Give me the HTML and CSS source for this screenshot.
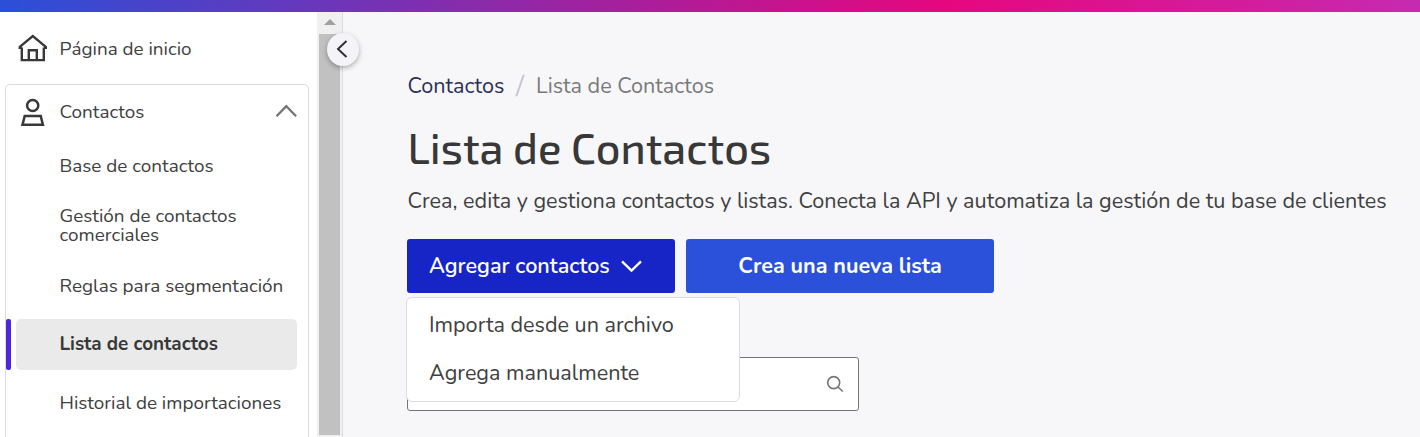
FILE: index.html
```html
<!DOCTYPE html>
<html lang="es">
<head>
  <meta charset="UTF-8" />
  <meta name="viewport" content="width=device-width, initial-scale=1.0" />
  <title>Lista de Contactos</title>
  <link rel="stylesheet" href="styles.css">
</head>
<body>
  <div class="topbar"></div>

  <div class="layout">
    <!-- Sidebar -->
    <aside class="sidebar">
      <nav class="menu">
        <a class="menu-item home">
          <svg class="menu-icon" width="30" height="30" viewBox="0 0 30 30" fill="none" stroke="#383838" stroke-width="2.4">
            <path d="M0.6 14.9H3.8M25.9 14.9H29M1.2 14.3L14.8 3L28.4 14.3M3.8 14.5V27.1H25.8V14.5M10.8 27V17.2H18.8V27" />
          </svg>
          <span>Página de inicio</span>
        </a>

        <div class="group">
          <a class="menu-item group-head">
            <svg class="menu-icon" width="30" height="30" viewBox="0 0 30 30" fill="none" stroke="#383838" stroke-width="2.5">
              <circle cx="14.7" cy="7.5" r="5.6" />
              <path d="M6.7 18H22.7L24.9 26.7H4.5Z" />
            </svg>
            <span>Contactos</span>
            <svg class="caret" width="22" height="14" viewBox="0 0 22 14" fill="none" stroke="#757575" stroke-width="2.3">
              <path d="M1.5 12.2L11.3 2.2L21.1 12.2" />
            </svg>
          </a>
          <div class="submenu">
            <a class="sub-item">Base de contactos</a>
            <a class="sub-item tall">Gestión de contactos<br>comerciales</a>
            <a class="sub-item">Reglas para segmentación</a>
            <a class="sub-item active">Lista de contactos</a>
            <a class="sub-item last">Historial de importaciones</a>
          </div>
        </div>
      </nav>

      <div class="scrollbar">
        <div class="scroll-up"></div>
        <div class="scroll-thumb"></div>
      </div>

      <button class="collapse">
        <svg width="12" height="18" viewBox="0 0 12 18" fill="none" stroke="#2e2e2e" stroke-width="1.9">
          <path d="M10.5 1L2 9L10.5 17" />
        </svg>
      </button>
    </aside>

    <!-- Content -->
    <main class="content">
      <div class="breadcrumb">
        <a class="crumb-link">Contactos</a>
        <svg class="crumb-sep" width="10" height="23" viewBox="0 0 10 23" fill="none" stroke="#c3c7d4" stroke-width="2">
          <path d="M1.3 22.3L8.7 0.7" />
        </svg>
        <span class="crumb-current">Lista de Contactos</span>
      </div>

      <h1>Lista de Contactos</h1>
      <p class="description">Crea, edita y gestiona contactos y listas. Conecta la API y automatiza la gestión de tu base de clientes</p>

      <div class="actions">
        <div class="dropdown">
          <button class="btn btn-dark">
            <span>Agregar contactos</span>
            <svg width="21" height="14" viewBox="0 0 21 14" fill="none" stroke="#fff" stroke-width="2.4">
              <path d="M1 2.3L10.5 11.6L20 2.3" />
            </svg>
          </button>
          <div class="dropdown-menu">
            <a>Importa desde un archivo</a>
            <a>Agrega manualmente</a>
          </div>
        </div>
        <button class="btn btn-blue">Crea una nueva lista</button>
      </div>

      <div class="search">
        <svg width="18" height="18" viewBox="0 0 18 18" fill="none" stroke="#757575" stroke-width="1.6">
          <circle cx="7.7" cy="7.6" r="6" />
          <path d="M12 12L16.8 16.5" />
        </svg>
      </div>
    </main>
  </div>
</body>
</html>
```

FILE: styles.css
```css
* {
  box-sizing: border-box;
}
body {
  margin: 0;
  height: 100vh;
  overflow: hidden;
  background: #f7f7fa;
  color: #404040;
  font-family: Nunito, Lato, sans-serif;
  display: flex;
  flex-direction: column;
}
button {
  font-family: inherit;
  border: 0;
  padding: 0;
}
svg {
  display: block;
  flex: none;
}

.topbar {
  height: 12px;
  flex: none;
  background: linear-gradient(90deg, #2b4fd9 0%, #e6077e 66.6%, #c62ab0 100%);
}

.layout {
  display: flex;
  flex: 1;
  min-height: 0;
}

/* Sidebar */
.sidebar {
  position: relative;
  width: 343px;
  flex: none;
  display: flex;
  background: #fff;
  border-right: 1px solid #dcdcdf;
}
.menu {
  width: 317px;
  overflow: hidden;
  padding-left: 5px;
  font-size: 18.9px;
  line-height: 19px;
  white-space: nowrap;
}
.menu-item {
  display: flex;
  align-items: center;
}
.menu-icon {
  margin-right: 12px;
}
.home {
  height: 72px;
  padding-left: 12.5px;
}
.home span {
  padding-top: 2px;
}
.group {
  width: 304px;
  height: 400px;
  border: 1px solid #dcdcdc;
  border-radius: 5px;
}
.group-head {
  height: 55px;
  padding: 0 11px 0 11.5px;
}
.caret {
  margin: -4px 0 0 auto;
}
.submenu {
  display: flex;
  flex-direction: column;
  gap: 8px;
  padding: 0 11px 0 10px;
}
.sub-item {
  position: relative;
  display: flex;
  align-items: center;
  height: 51px;
  flex: none;
  padding: 1px 0 0 43.5px;
  border-radius: 5px;
}
.sub-item.tall {
  height: 53px;
}
.sub-item.active,
.sub-item.last {
  padding-top: 0;
  padding-bottom: 1px;
}
.sub-item.active {
  background: #eaeaea;
  color: #383838;
  font-weight: 700;
}
.sub-item.active::before {
  content: "";
  position: absolute;
  left: -10px;
  top: 0;
  width: 5px;
  height: 51px;
  border-radius: 2px;
  background: #4a28dc;
}

.scrollbar {
  flex: 1;
  display: flex;
  flex-direction: column;
  padding: 0 2px;
  background: #f0f0f0;
}
.scroll-up {
  height: 22px;
  flex: none;
  display: flex;
  align-items: center;
  justify-content: center;
}
.scroll-up::before {
  content: "";
  margin-top: -2px;
  border: 6px solid transparent;
  border-top: 0;
  border-bottom-color: #a0a0a0;
}
.scroll-thumb {
  flex: 1;
  margin-bottom: 2px;
  background: #c1c1c1;
}
.collapse {
  position: absolute;
  top: 21px;
  right: -17px;
  width: 32px;
  height: 33px;
  display: flex;
  align-items: center;
  justify-content: center;
  padding-right: 3px;
  padding-bottom: 1px;
  border-radius: 50%;
  background: #f4f4f8;
  box-shadow: 0 2px 5px rgba(0, 0, 0, 0.3);
}

/* Content */
.content {
  flex: 1;
  padding: 60px 0 0 64.5px;
  font-size: 21.6px;
  white-space: nowrap;
}
.breadcrumb {
  display: flex;
  align-items: center;
  height: 28px;
}
.crumb-link {
  width: 96.5px;
  color: #2b3156;
}
.crumb-sep {
  margin: -2px 11px 0;
}
.crumb-current {
  color: #7a7a7a;
}
h1 {
  margin: 21px 0 0;
  color: #383838;
  font: 500 43.2px/52px "Exo 2", Roboto, sans-serif;
}
.description {
  margin: 13px 0 0;
  line-height: 30px;
}
.actions {
  display: flex;
  gap: 11px;
  margin: 23px 0 0 -0.5px;
}
.dropdown {
  position: relative;
}
.btn {
  height: 54px;
  display: flex;
  align-items: center;
  border-radius: 3px;
  color: #fff;
  font-size: 21.6px;
  font-weight: 700;
}
.btn-dark {
  width: 268px;
  padding-left: 22px;
  background: #1724c6;
  font-weight: 600;
}
.btn-dark svg {
  margin-left: auto;
  margin-right: 33px;
}
.btn-blue {
  width: 308px;
  justify-content: center;
  background: #2b50d9;
}
.dropdown-menu {
  position: absolute;
  z-index: 1;
  top: 58px;
  left: -1px;
  width: 334px;
  height: 105px;
  padding: 3px 22px;
  border: 1px solid #dcdcdf;
  border-radius: 6px;
  background: #fff;
}
.dropdown-menu a {
  display: block;
  line-height: 48px;
}
.search {
  display: flex;
  align-items: center;
  justify-content: flex-end;
  width: 452px;
  height: 54px;
  margin: 64px 0 0 -0.5px;
  padding-right: 14px;
  border: 1px solid #757575;
  border-radius: 3px;
  background: #fff;
}
```
